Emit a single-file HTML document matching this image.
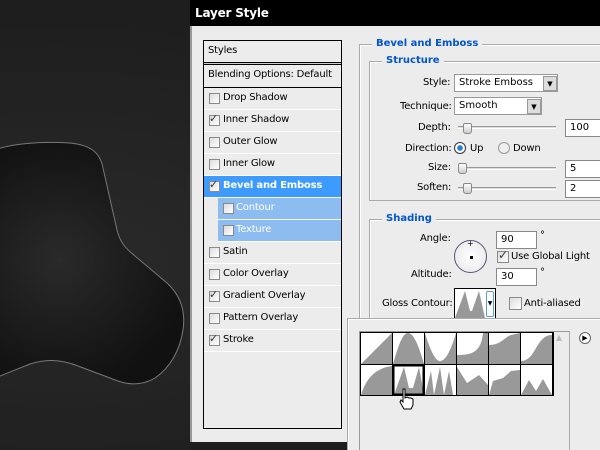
<!DOCTYPE html>
<html style="overflow:hidden;width:600px;height:450px"><head><style>
*{margin:0;padding:0;box-sizing:border-box}
body{width:600px;height:450px;overflow:hidden;position:relative;background:radial-gradient(ellipse at 60px 260px,#2a2a2a,#1f1f1f 60%,#1a1a1a);font-family:Tahoma,"DejaVu Sans",sans-serif;font-size:11px;color:#000}
.a{position:absolute}
.t{position:absolute;white-space:nowrap;font-family:"DejaVu Sans",sans-serif;font-size:10px;letter-spacing:-0.2px}
.cb{position:absolute;width:11px;height:11px;border:1px solid #8a8a8a;background:linear-gradient(135deg,#dcdcdc,#fff)}
.ck{position:absolute;color:#334;font-size:11px;font-weight:bold;font-family:"DejaVu Sans",sans-serif}
.row{position:absolute;left:204px;width:137px;height:22px;border-bottom:1px solid #fff}
.bl{color:#0055cc;font-weight:bold;font-family:"DejaVu Sans",sans-serif;font-size:10px;position:absolute;background:#ececec;padding:0 4px}
.in{position:absolute;background:#fff;border:1px solid #888;height:18px;font-family:"DejaVu Sans",sans-serif;font-size:10px;padding:2px 4px}
.sl{position:absolute;height:3px;border-top:1px solid #999;border-bottom:1px solid #fff;background:#ddd}
.th{position:absolute;width:9px;height:11px;background:linear-gradient(#fff,#ccc);border:1px solid #888;border-radius:2px 2px 3px 3px}
</style></head><body>
<svg class="a" style="left:0;top:0" width="200" height="450">
<defs><radialGradient id="g" cx="60" cy="260" r="130" gradientUnits="userSpaceOnUse"><stop offset="0" stop-color="#2a2a2a"/><stop offset="1" stop-color="#111"/></radialGradient></defs>
<path d="M-5,150 C10,144 40,141 70,143 C90,145 100,152 103,168 L117,230 C120,242 125,248 135,256 L167,283 C180,295 186,310 183,330 C180,350 170,368 155,378 C145,384 132,386 118,381 L78,366 C60,359 45,359 30,364 L-5,378 Z" fill="url(#g)" stroke="#777" stroke-width="1"/>
</svg>
<div class="a" style="left:190px;top:0;width:412px;height:443px;background:#ececec;border-left:2px solid #999"></div>
<div class="a" style="left:190px;top:0;width:410px;height:26px;background:#000"></div>
<div class="t" style="left:195px;top:6px;color:#fff;font-weight:bold;font-size:12px">Layer Style</div>
<div class="a" style="left:190px;top:442px;width:157px;height:8px;background:#1e1e1e"></div>
<div class="a" style="left:203px;top:40px;width:139px;height:389px;border:1px solid #000;background:#ececec"></div>
<div class="t" style="left:208px;top:45px">Styles</div>
<div class="a" style="left:204px;top:62px;width:137px;height:3px;border-top:1px solid #000;border-bottom:1px solid #000;background:#ccc"></div>
<div class="t" style="left:208px;top:69px">Blending Options: Default</div>
<div class="a" style="left:204px;top:87px;width:137px;height:1px;background:#000"></div>
<div class="row" style="top:88px"></div><div class="cb" style="left:209px;top:93px"></div><div class="t" style="left:223px;top:92px">Drop Shadow</div>
<div class="row" style="top:110px"></div><div class="cb" style="left:209px;top:115px"></div><div class="ck" style="left:209px;top:112px">&#10003;</div><div class="t" style="left:223px;top:114px">Inner Shadow</div>
<div class="row" style="top:132px"></div><div class="cb" style="left:209px;top:137px"></div><div class="t" style="left:223px;top:136px">Outer Glow</div>
<div class="row" style="top:154px"></div><div class="cb" style="left:209px;top:159px"></div><div class="t" style="left:223px;top:158px">Inner Glow</div>
<div class="row" style="top:176px;background:#3d9bff"></div><div class="cb" style="left:209px;top:181px"></div><div class="ck" style="left:209px;top:178px">&#10003;</div><div class="t" style="left:223px;top:180px;color:#fff;font-weight:bold">Bevel and Emboss</div>
<div class="row" style="top:198px;left:218px;width:123px;background:#8cbcf0"></div><div class="cb" style="left:223px;top:203px"></div><div class="t" style="left:236px;top:202px;color:#fff">Contour</div>
<div class="row" style="top:220px;left:218px;width:123px;background:#8cbcf0"></div><div class="cb" style="left:223px;top:225px"></div><div class="t" style="left:236px;top:224px;color:#fff">Texture</div>
<div class="row" style="top:242px"></div><div class="cb" style="left:209px;top:247px"></div><div class="t" style="left:223px;top:246px">Satin</div>
<div class="row" style="top:264px"></div><div class="cb" style="left:209px;top:269px"></div><div class="t" style="left:223px;top:268px">Color Overlay</div>
<div class="row" style="top:286px"></div><div class="cb" style="left:209px;top:291px"></div><div class="ck" style="left:209px;top:288px">&#10003;</div><div class="t" style="left:223px;top:290px">Gradient Overlay</div>
<div class="row" style="top:308px"></div><div class="cb" style="left:209px;top:313px"></div><div class="t" style="left:223px;top:312px">Pattern Overlay</div>
<div class="row" style="top:330px"></div><div class="cb" style="left:209px;top:335px"></div><div class="ck" style="left:209px;top:332px">&#10003;</div><div class="t" style="left:223px;top:334px">Stroke</div>
<div class="a" style="left:359px;top:44px;width:241px;height:406px;border-left:1px solid #aaa;border-top:1px solid #aaa;box-shadow:inset 1px 1px #fff"></div>
<div class="bl" style="left:372px;top:38px">Bevel and Emboss</div>
<div class="a" style="left:369px;top:61px;width:235px;height:140px;border:1px solid #aaa;box-shadow:inset 1px 1px #fff"></div>
<div class="bl" style="left:382px;top:55px">Structure</div>
<div class="t" style="left:423px;top:77px">Style:</div>
<div class="in" style="left:454px;top:74px;width:104px;border-color:#999">Stroke Emboss</div>
<div class="a" style="left:543px;top:76px;width:14px;height:15px;background:#ddd;border:1px solid #999;font-size:7px;text-align:center;line-height:14px">&#9660;</div>
<div class="t" style="left:400px;top:101px">Technique:</div>
<div class="in" style="left:454px;top:97px;width:88px;border-color:#999">Smooth</div>
<div class="a" style="left:527px;top:99px;width:14px;height:15px;background:#ddd;border:1px solid #999;font-size:7px;text-align:center;line-height:14px">&#9660;</div>
<div class="t" style="left:418px;top:122px">Depth:</div>
<div class="sl" style="left:458px;top:126px;width:98px"></div><div class="th" style="left:463px;top:123px"></div>
<div class="in" style="left:565px;top:119px;width:40px">100</div>
<div class="t" style="left:405px;top:143px">Direction:</div>
<div class="a" style="left:454px;top:142px;width:12px;height:12px;border-radius:50%;border:1px solid #334;background:radial-gradient(#2a7fd0 35%,#fff 45%)"></div>
<div class="t" style="left:470px;top:143px">Up</div>
<div class="a" style="left:498px;top:142px;width:12px;height:12px;border-radius:50%;border:1px solid #999;background:#eee"></div>
<div class="t" style="left:513px;top:143px">Down</div>
<div class="t" style="left:428px;top:162px">Size:</div>
<div class="sl" style="left:458px;top:167px;width:98px"></div><div class="th" style="left:458px;top:163px"></div>
<div class="in" style="left:565px;top:160px;width:40px">5</div>
<div class="t" style="left:417px;top:182px">Soften:</div>
<div class="sl" style="left:458px;top:187px;width:98px"></div><div class="th" style="left:463px;top:183px"></div>
<div class="in" style="left:565px;top:180px;width:40px">2</div>
<div class="a" style="left:369px;top:219px;width:231px;height:231px;border-left:1px solid #aaa;border-top:1px solid #aaa;box-shadow:inset 1px 1px #fff"></div>
<div class="bl" style="left:382px;top:213px">Shading</div>
<div class="t" style="left:420px;top:233px">Angle:</div>
<div class="a" style="left:454px;top:240px;width:33px;height:33px;border-radius:50%;border:1px solid #557;background:radial-gradient(#fff,#e6e6e6)"></div>
<div class="a" style="left:470px;top:256px;width:3px;height:3px;background:#000"></div>
<div class="t" style="left:467px;top:239px;font-size:8px">+</div>
<div class="in" style="left:496px;top:231px;width:41px">90</div><div class="t" style="left:540px;top:230px">°</div>
<div class="cb" style="left:497px;top:251px;width:12px;height:12px"></div><div class="ck" style="left:498px;top:248px;font-size:12px">&#10003;</div>
<div class="t" style="left:511px;top:251px">Use Global Light</div>
<div class="t" style="left:411px;top:269px">Altitude:</div>
<div class="in" style="left:496px;top:268px;width:41px">30</div><div class="t" style="left:540px;top:267px">°</div>
<div class="t" style="left:382px;top:298px">Gloss Contour:</div>
<div class="a" style="left:454px;top:288px;width:42px;height:31px;border:1px solid #000;background:#fff"></div>
<svg class="a" style="left:455px;top:289px" width="30" height="29"><path d="M0,29 L10,2 L15,22 L17,22 L24,2 L30,29Z" fill="#999"/></svg>
<div class="a" style="left:486px;top:291px;width:8px;height:26px;border:1px solid #5a9ad8;border-radius:2px;background:#fff;font-size:6px;line-height:24px;text-align:center">&#9660;</div>
<div class="cb" style="left:509px;top:297px;width:13px;height:13px"></div>
<div class="t" style="left:524px;top:298px">Anti-aliased</div>
<div class="a" style="left:347px;top:318px;width:253px;height:132px;background:#ececec;border-top:1px solid #aaa;border-left:1px solid #aaa;box-shadow:inset 1px 1px #fff"></div>
<div class="a" style="left:359px;top:331px;width:211px;height:119px;border-left:1px solid #999;border-top:1px solid #999;border-right:1px solid #aaa"></div>
<div class="a" style="left:360px;top:332px;width:194px;height:64px;background:#000"></div>
<svg class="a" style="left:361px;top:333px" width="192" height="62">
<g fill="#999">
<rect x="0" y="0" width="31" height="31" fill="#fff"/><path d="M0,31 L31,0 L31,31Z"/>
<rect x="32" y="0" width="31" height="31" fill="#fff"/><path d="M32,31 C38,10 42,0 47,0 C52,0 57,10 63,31Z"/>
<rect x="64" y="0" width="31" height="31" fill="#fff"/><path d="M64,0 C70,20 75,28 79,28 C84,28 89,20 95,0 L95,31 L64,31Z"/>
<rect x="96" y="0" width="31" height="31" fill="#fff"/><path d="M96,31 L96,22 C110,22 120,20 122,0 L127,0 L127,31Z"/>
<rect x="128" y="0" width="31" height="31" fill="#fff"/><path d="M128,31 L128,12 C140,12 142,5 150,2 L159,0 L159,31Z"/>
<rect x="160" y="0" width="31" height="31" fill="#fff"/><path d="M160,31 L160,28 C175,28 175,2 191,2 L191,31Z"/>
<rect x="0" y="32" width="31" height="30" fill="#fff"/><path d="M0,62 C5,45 15,35 31,33 L31,62Z"/>
<rect x="32" y="32" width="31" height="30" fill="#fff"/><path d="M33,62 L43,34 L48,55 L52,55 L58,34 L63,62Z"/>
<rect x="64" y="32" width="31" height="30" fill="#fff"/><path d="M64,62 L70,38 L73,62 L79,34 L83,62 L88,38 L92,62Z"/>
<rect x="96" y="32" width="31" height="30" fill="#fff"/><path d="M96,62 L96,34 L106,50 L118,42 L127,52 L127,62Z"/>
<rect x="128" y="32" width="31" height="30" fill="#fff"/><path d="M128,62 L132,48 L142,45 L150,38 L159,37 L159,62Z"/>
<rect x="160" y="32" width="31" height="30" fill="#fff"/><path d="M160,62 L168,47 L175,58 L182,46 L191,62Z"/>
</g>
<rect x="32.5" y="32.5" width="30" height="29" fill="none" stroke="#000" stroke-width="2"/>
</svg>
<div class="t" style="left:556px;top:333px;color:#bbb;font-size:8px">&#9650;</div>
<div class="a" style="left:579px;top:332px;width:12px;height:12px;border-radius:50%;border:1px solid #666;background:#fff;font-size:7px;line-height:10px;text-align:center">&#9654;</div>
<svg class="a" style="left:398px;top:388px" width="18" height="22"><path d="M5,1 L7,1 L7,10 L9,9 L11,10 L13,10 L15,11 L15,17 L13,21 L6,21 L2,14 L3,12 L5,14 Z" fill="#fff" stroke="#000" stroke-width="1"/></svg>
</body></html>
